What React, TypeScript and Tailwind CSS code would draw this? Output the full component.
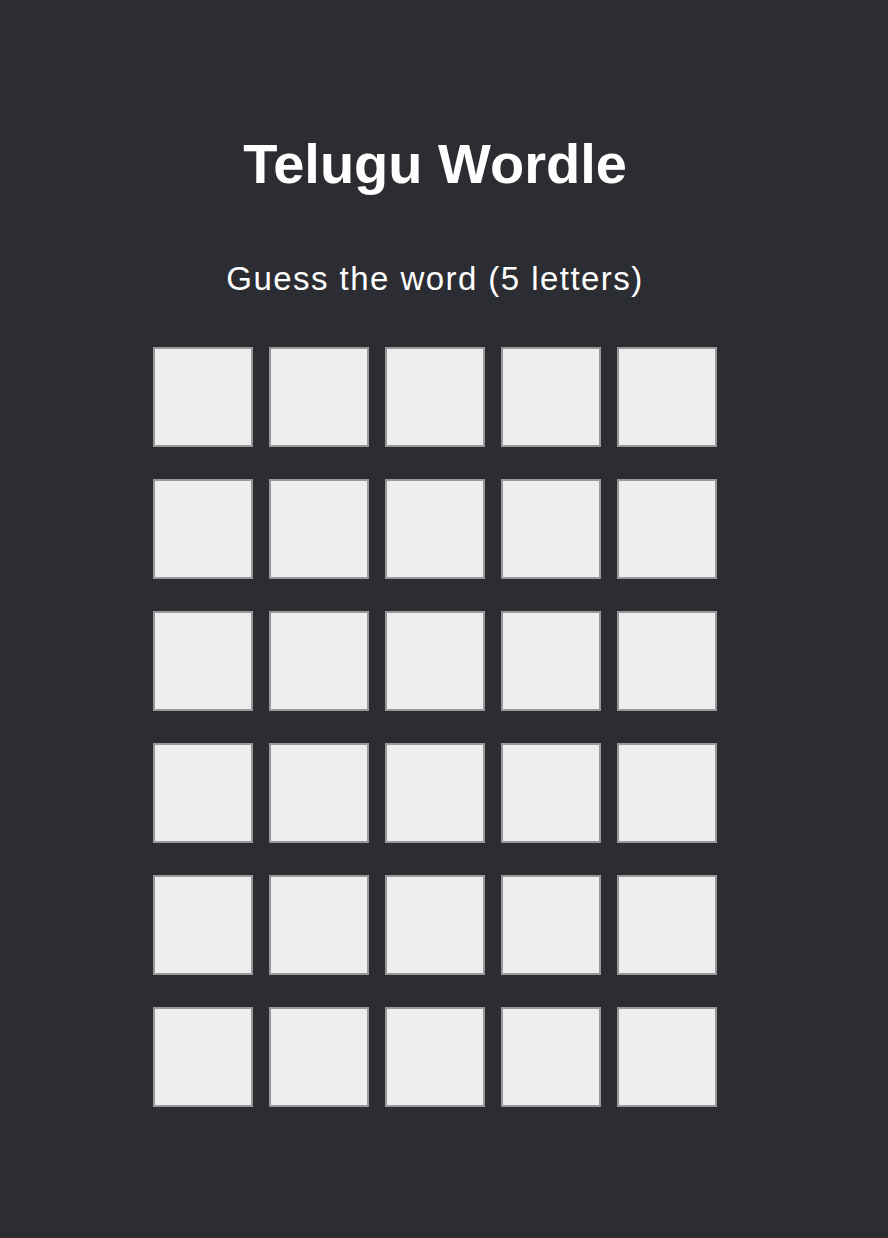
export default function App() {
  const rows = Array.from({ length: 6 });
  const cols = Array.from({ length: 5 });

  return (
    <div className="min-h-[1238px] bg-[#2c2d32] pr-[18px] font-['Liberation_Sans',Arial,sans-serif] text-white">
      <div className="flex flex-col items-center pt-[132px]">
        <h1 className="text-[56px] font-bold leading-[64px]">Telugu Wordle</h1>
        <p className="mt-[64px] text-[33px] leading-[38px] tracking-[1.45px]">Guess the word (5 letters)</p>
        <div className="mt-[49px] flex flex-col gap-8">
          {rows.map((_, r) => (
            <div key={r} className="flex gap-4">
              {cols.map((_, c) => (
                <div key={c} className="h-[100px] w-[100px] border-2 border-[#999999] bg-[#eeeeee]" />
              ))}
            </div>
          ))}
        </div>
      </div>
    </div>
  );
}
